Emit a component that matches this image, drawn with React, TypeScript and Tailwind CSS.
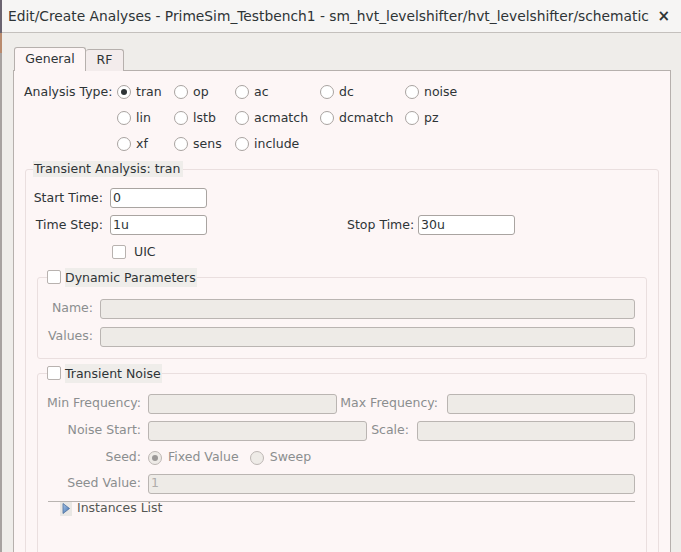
import React from "react";

const font = "font-['DejaVu_Sans',sans-serif]";

function Radio({ checked, disabled }: { checked?: boolean; disabled?: boolean }) {
  return (
    <span
      className={`flex h-[14px] w-[14px] shrink-0 items-center justify-center rounded-full border ${
        disabled ? "border-[#bdb7b4] bg-[#eeebe7]" : "border-[#a9a3a0] bg-white"
      }`}
    >
      {checked && (
        <span className={`h-[6px] w-[6px] rounded-full ${disabled ? "bg-[#9b9897]" : "bg-[#2e3436]"}`} />
      )}
    </span>
  );
}

function Check() {
  return <span className="block h-[14px] w-[14px] shrink-0 rounded-[2px] border border-[#b8b2af] bg-white" />;
}

function Input({ value, w, disabled }: { value?: string; w: number | "flex"; disabled?: boolean }) {
  return (
    <div
      className={`flex h-[20px] items-center rounded-[3px] border px-[2px] text-[12.5px] ${
        disabled ? "border-[#bab5b2] bg-[#eeebe7] text-[#b0adab]" : "border-[#a9a4a1] bg-white text-[#2e3436]"
      } ${w === "flex" ? "flex-1" : ""}`}
      style={w === "flex" ? undefined : { width: w }}
    >
      {value}
    </div>
  );
}

const types = [
  ["tran", "op", "ac", "dc", "noise"],
  ["lin", "lstb", "acmatch", "dcmatch", "pz"],
  ["xf", "sens", "include"],
];

export default function App() {
  return (
    <div className={`flex h-[552px] w-[681px] overflow-hidden bg-[#efedea] text-[12.5px] text-[#2e3436] ${font}`}>
      <div className="flex w-[2px] flex-col bg-[#8f8a94]">
        <div className="h-[33px] bg-[#6b6470]" />
        <div className="h-[20px] bg-[#b98b6e]" />
        <div className="flex-1 bg-[#a7a2a0]" />
      </div>
      <div className="flex flex-1 flex-col">
        {/* title bar */}
        <div className="flex h-[33px] shrink-0 items-center justify-between border-b border-[#c4c0bd] bg-[#f6f5f4] pl-[6px] pr-[11px] text-[13.8px] text-[#2e3436]">
          <span>Edit/Create Analyses - PrimeSim_Testbench1 - sm_hvt_levelshifter/hvt_levelshifter/schematic</span>
          <span className="text-[15px] font-bold">×</span>
        </div>

        <div className="flex flex-1 flex-col pl-[11px] pr-[10px] pt-[14px]">
          {/* tabs */}
          <div className="relative z-10 flex items-end">
            <div className="ml-[1px] flex h-[24px] w-[72px] items-center justify-center rounded-t-[3px] border border-b-0 border-[#b6b0ad] bg-[#fdf6f6] pb-[1px]">
              General
            </div>
            <div className="flex h-[22px] w-[38px] items-center justify-center rounded-t-[3px] border border-b-0 border-l-0 border-[#b6b0ad] bg-[#f3ecec]">
              RF
            </div>
          </div>

          {/* panel */}
          <div className="-mt-px flex-1 border border-[#b6b0ad] bg-[#fdf6f6] pt-[8px]">
            {/* analysis type */}
            <div className="flex pl-[10px]">
              <div className="flex h-[26px] w-[93px] items-center">Analysis Type:</div>
              <div className="grid grid-cols-[57px_61px_85px_85px_auto]">
                {types.map((row) =>
                  row.map((t) => (
                    <div key={t} className="flex h-[26px] items-center gap-[5px]">
                      <Radio checked={t === "tran"} />
                      <span>{t}</span>
                    </div>
                  ))
                )}
              </div>
            </div>

            {/* transient analysis group */}
            <fieldset className="mx-[11px] mt-[4px] rounded-[3px] border border-[#eadfdf] pb-[40px]">
              <legend className="ml-[7px] h-[16px] bg-[#efedea] pl-[1px] pr-[3px] leading-[16px]">
                Transient Analysis: tran
              </legend>

              <div className="mt-[11px] flex items-center">
                <div className="w-[84px] pr-[7px] text-right">Start Time:</div>
                <Input value="0" w={97} />
              </div>
              <div className="mt-[7px] flex items-center">
                <div className="w-[84px] pr-[7px] text-right">Time Step:</div>
                <Input value="1u" w={97} />
                <div className="ml-[140px] w-[71px]">Stop Time:</div>
                <Input value="30u" w={97} />
              </div>
              <div className="mt-[8px] flex items-center pl-[86px]">
                <Check />
                <span className="ml-[8px]">UIC</span>
              </div>

              {/* dynamic parameters */}
              <fieldset className="ml-[11px] mr-[11px] mt-[6px] rounded-[3px] border border-[#eadfdf] pb-[11px]">
                <legend className="ml-[9px] flex h-[19px] items-center">
                  <Check />
                  <span className="ml-[4px] bg-[#efedea] pr-[1px] leading-[19px]">Dynamic Parameters</span>
                </legend>
                <div className="mt-[12px] flex items-center pr-[11px] text-[#8b8e8f]">
                  <div className="w-[62px] pr-[7px] text-right">Name:</div>
                  <Input w="flex" disabled />
                </div>
                <div className="mt-[8px] flex items-center pr-[11px] text-[#8b8e8f]">
                  <div className="w-[62px] pr-[7px] text-right">Values:</div>
                  <Input w="flex" disabled />
                </div>
              </fieldset>

              {/* transient noise */}
              <fieldset className="ml-[11px] mr-[11px] mt-[5px] rounded-[3px] border border-[#eadfdf] pb-[60px] text-[#8b8e8f]">
                <legend className="ml-[9px] flex h-[19px] items-center">
                  <Check />
                  <span className="ml-[4px] bg-[#efedea] pr-[1px] leading-[19px] text-[#2e3436]">Transient Noise</span>
                </legend>
                <div className="mt-[11px] flex items-center pr-[11px]">
                  <div className="w-[110px] pr-[7px] text-right">Min Frequency:</div>
                  <Input w={189} disabled />
                  <div className="w-[110px] pr-[9px] text-right">Max Frequency:</div>
                  <Input w="flex" disabled />
                </div>
                <div className="mt-[7px] flex items-center pr-[11px]">
                  <div className="w-[110px] pr-[7px] text-right">Noise Start:</div>
                  <Input w={219} disabled />
                  <div className="w-[50px] pr-[8px] text-right">Scale:</div>
                  <Input w="flex" disabled />
                </div>
                <div className="mt-[7px] flex h-[20px] items-center">
                  <div className="w-[110px] pr-[7px] text-right">Seed:</div>
                  <Radio checked disabled />
                  <span className="ml-[6px]">Fixed Value</span>
                  <span className="ml-[11px]">
                    <Radio disabled />
                  </span>
                  <span className="ml-[6px]">Sweep</span>
                </div>
                <div className="mt-[6px] flex items-center pr-[11px]">
                  <div className="w-[110px] pr-[7px] text-right">Seed Value:</div>
                  <Input value="1" w="flex" disabled />
                </div>
                <div className="ml-[10px] mr-[11px] mt-[7px] border-t border-[#b9b4b1]" />
                <div className="ml-[22px] flex h-[14px] items-center">
                  <span className="flex h-[14px] w-[12px] items-center justify-center bg-[#e9e7e4]">
                    <svg width="8" height="11" viewBox="0 0 8 11">
                      <defs>
                        <linearGradient id="tri" x1="0" y1="0" x2="1" y2="1">
                          <stop offset="0" stopColor="#a9c6e8" />
                          <stop offset="1" stopColor="#3d6fb0" />
                        </linearGradient>
                      </defs>
                      <path d="M1 0.5 L7.5 5.5 L1 10.5 Z" fill="url(#tri)" stroke="#4a6f9c" strokeWidth="0.8" />
                    </svg>
                  </span>
                  <span className="ml-[5px] text-[#555753]">Instances List</span>
                </div>
              </fieldset>
            </fieldset>
          </div>
        </div>
      </div>
    </div>
  );
}
